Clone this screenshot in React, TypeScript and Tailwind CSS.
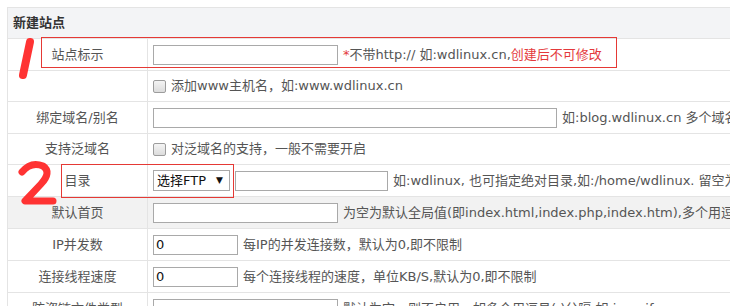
import React from 'react';

const font = { fontFamily: '"DejaVu Sans", "Noto Sans CJK SC", sans-serif' };

function Checkbox() {
  return (
    <span className="inline-block w-[13px] h-[13px] rounded-[2px] border border-[#9c9c9c] bg-gradient-to-b from-[#f4f4f4] to-[#dcdcdc] mr-[5px] shrink-0" />
  );
}

function Input({ w, value }: { w: string; value?: string }) {
  return (
    <span className={`inline-flex items-center h-[20px] border border-[#a9a9a9] bg-white pl-[2px] text-[13px] text-[#111] shrink-0 ${w}`}>
      {value}
    </span>
  );
}

function Row({
  label,
  h = 'h-[32px]',
  gray = false,
  children,
}: {
  label: string;
  h?: string;
  gray?: boolean;
  children?: React.ReactNode;
}) {
  return (
    <div className={`flex border-b border-[#e4e4e4] ${h} ${gray ? 'bg-[#f2f2f2]' : 'bg-white'}`}>
      <div className="w-[140px] shrink-0 border-r border-[#e4e4e4] flex items-center justify-center text-[13px] text-[#555]">
        {label}
      </div>
      <div className="flex items-center pl-[5px] gap-[5px] text-[13px] text-[#555] whitespace-nowrap">
        {children}
      </div>
    </div>
  );
}

export default function App() {
  return (
    <div className="relative w-[730px] h-[306px] overflow-hidden bg-white pt-[7px] pl-[7px]" style={font}>
      <div className="w-[800px] border-l border-t border-[#e4e4e4]">
        <div className="h-[31px] bg-[#f3f4f6] border-b border-[#e4e4e4] flex items-center pl-[5px] text-[13px] font-bold text-[#333]">
          新建站点
        </div>
        <Row label="站点标示">
          <Input w="w-[185px]" />
          <span>
            <span className="text-[#e4393c]">*</span>不带http:// 如:wdlinux.cn,
            <span className="text-[#e4393c]">创建后不可修改</span>
          </span>
        </Row>
        <Row label="" h="h-[31px]">
          <span className="flex items-center">
            <Checkbox />
            添加www主机名，如:www.wdlinux.cn
          </span>
        </Row>
        <Row label="绑定域名/别名">
          <Input w="w-[404px]" />
          <span>如:blog.wdlinux.cn 多个域名用逗号(,)分隔</span>
        </Row>
        <Row label="支持泛域名" h="h-[31px]">
          <span className="flex items-center">
            <Checkbox />
            对泛域名的支持，一般不需要开启
          </span>
        </Row>
        <Row label="目录">
          <span className="flex items-center justify-between w-[77px] h-[21px] border border-[#a9a9a9] bg-white pl-[3px] pr-[6px] text-[13px] text-[#111]">
            选择FTP
            <span className="text-[9px]">▼</span>
          </span>
          <Input w="w-[153px]" />
          <span>如:wdlinux, 也可指定绝对目录,如:/home/wdlinux. 留空为默认目录</span>
        </Row>
        <Row label="默认首页" gray>
          <Input w="w-[185px]" />
          <span>为空为默认全局值(即index.html,index.php,index.htm),多个用逗号(,)分隔</span>
        </Row>
        <Row label="IP并发数">
          <Input w="w-[85px]" value="0" />
          <span>每IP的并发连接数，默认为0,即不限制</span>
        </Row>
        <Row label="连接线程速度">
          <Input w="w-[85px]" value="0" />
          <span>每个连接线程的速度，单位KB/S,默认为0,即不限制</span>
        </Row>
        <Row label="防盗链文件类型">
          <Input w="w-[185px]" />
          <span>默认为空，则不启用，如多个用逗号(,)分隔,如:jpg,gif</span>
        </Row>
      </div>

      {/* annotation overlays */}
      <div className="absolute left-[41px] top-[37px] w-[576px] h-[31px] border border-[#e53935]" />
      <div className="absolute left-[61px] top-[164px] w-[173px] h-[34px] border border-[#e53935]" />
      <svg className="absolute left-0 top-0" width="80" height="220" viewBox="0 0 80 220">
        <path d="M30,42 L23,75" stroke="#ff3333" strokeWidth="8" strokeLinecap="round" fill="none" />
        <path
          d="M22,172 Q31,161 43,166 Q52,172 41,184 L25,201 L53,201"
          stroke="#ff3333"
          strokeWidth="7"
          strokeLinecap="round"
          strokeLinejoin="round"
          fill="none"
        />
      </svg>
    </div>
  );
}
